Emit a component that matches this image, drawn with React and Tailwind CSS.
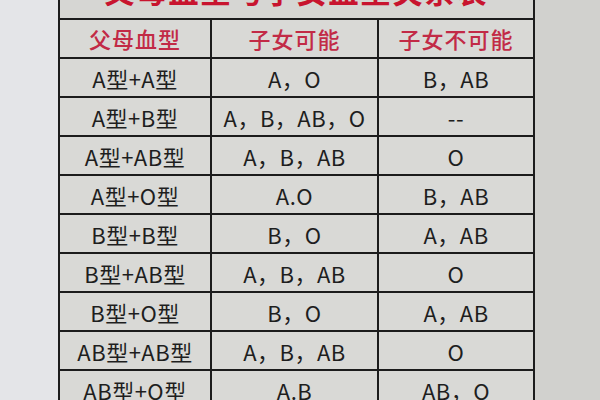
import React from 'react';

const rows = [
  ['A型+A型', 'A，O', 'B，AB'],
  ['A型+B型', 'A，B，AB，O', '--'],
  ['A型+AB型', 'A，B，AB', 'O'],
  ['A型+O型', 'A.O', 'B，AB'],
  ['B型+B型', 'B，O', 'A，AB'],
  ['B型+AB型', 'A，B，AB', 'O'],
  ['B型+O型', 'B，O', 'A，AB'],
  ['AB型+AB型', 'A，B，AB', 'O'],
  ['AB型+O型', 'A.B', 'AB，O'],
];

const headers = ['父母血型', '子女可能', '子女不可能'];

const App = () => {
  return (
    <div
      className="flex w-[600px] h-[400px] overflow-hidden"
      style={{ fontFamily: '"Noto Sans CJK SC", "Noto Sans", sans-serif' }}
    >
      {/* left margin of the paper */}
      <div className="w-[58px] shrink-0 bg-[#e4e5e8]" />

      {/* table */}
      <div className="w-[477px] shrink-0 flex flex-col bg-[#1c1c1c] px-[2px]">
        <div className="h-[18px] shrink-0 bg-[#d6d6d3] overflow-hidden flex justify-center">
          <div className="-mt-[25px] text-[30px] leading-[30px] font-bold text-[#c8142f] tracking-[2px] whitespace-nowrap">
            父母血型与子女血型关系表
          </div>
        </div>
        <div className="grid grid-cols-[150px_165px_154px] gap-[2px] pt-[2px]">
          {headers.map((h) => (
            <div
              key={h}
              className="h-[37px] bg-[#d9d9d6] flex items-center justify-center text-[22px] tracking-[1px] text-[#c22a46] font-medium"
            >
              {h}
            </div>
          ))}
          {rows.map((r) =>
            r.map((c, i) => (
              <div
                key={r[0] + i}
                className="h-[37px] bg-[#d9d9d6] flex items-center justify-center text-[22px] text-[#1e1e1e] pt-[2px] tracking-[0.5px]"
              >
                {c}
              </div>
            ))
          )}
        </div>
      </div>

      {/* right margin */}
      <div className="flex-1 bg-[#d1d1ce]" />
    </div>
  );
};

export default App;
